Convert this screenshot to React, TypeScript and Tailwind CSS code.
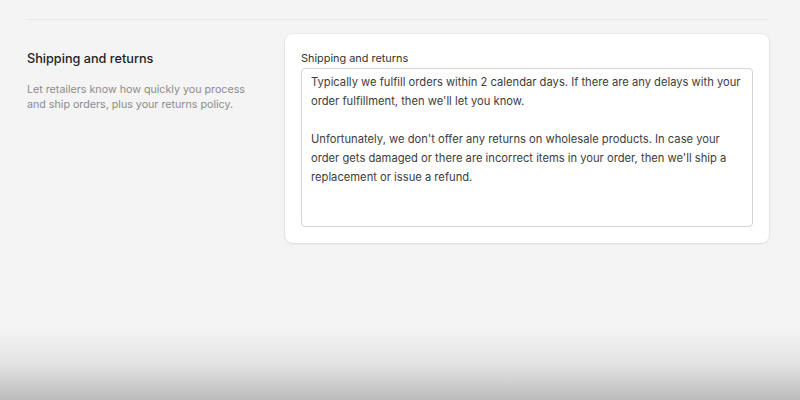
export default function App() {
  const font = { fontFamily: 'Inter, "Noto Sans", sans-serif' };
  return (
    <div className="relative w-[800px] h-[400px] overflow-hidden bg-[#f4f4f4]" style={font}>
      <div className="px-[27px] pt-[19px]">
        <div className="w-[741px] h-px bg-[#e6e6e6]" />
        <div className="flex pt-[14px]">
          <div className="w-[258px] shrink-0 pt-[17px]">
            <h2 className="text-[12.7px] leading-[16px] font-medium text-[#222]">Shipping and returns</h2>
            <p className="mt-[15px] text-[10.7px] leading-[15px] text-[#8c8c8c] w-[235px]">
              Let retailers know how quickly you process and ship orders, plus your returns policy.
            </p>
          </div>
          <div className="w-[484px] rounded-[8px] bg-white px-[16px] pt-[16px] pb-[16px] shadow-[0_0_0_1px_rgba(0,0,0,0.03),0_1px_3px_rgba(0,0,0,0.08)]">
            <div className="text-[10.9px] leading-[16px] text-[#333] mb-[2px]">Shipping and returns</div>
            <div className="h-[159px] rounded-[4px] border border-[#d4d4d4] pl-[9px] pr-[10px] pt-[4px] text-[11.2px] leading-[19px] text-[#3d3d3d]">
              <p>Typically we fulfill orders within 2 calendar days. If there are any delays with your order fulfillment, then we'll let you know.</p>
              <p className="mt-[19px]">Unfortunately, we don't offer any returns on wholesale products. In case your order gets damaged or there are incorrect items in your order, then we'll ship a replacement or issue a refund.</p>
            </div>
          </div>
        </div>
      </div>
      <div className="pointer-events-none absolute inset-x-0 bottom-0 h-[70px] bg-gradient-to-b from-[#f4f4f4]/0 via-[#e2e2e2] to-[#bcbcbc]" />
    </div>
  );
}
